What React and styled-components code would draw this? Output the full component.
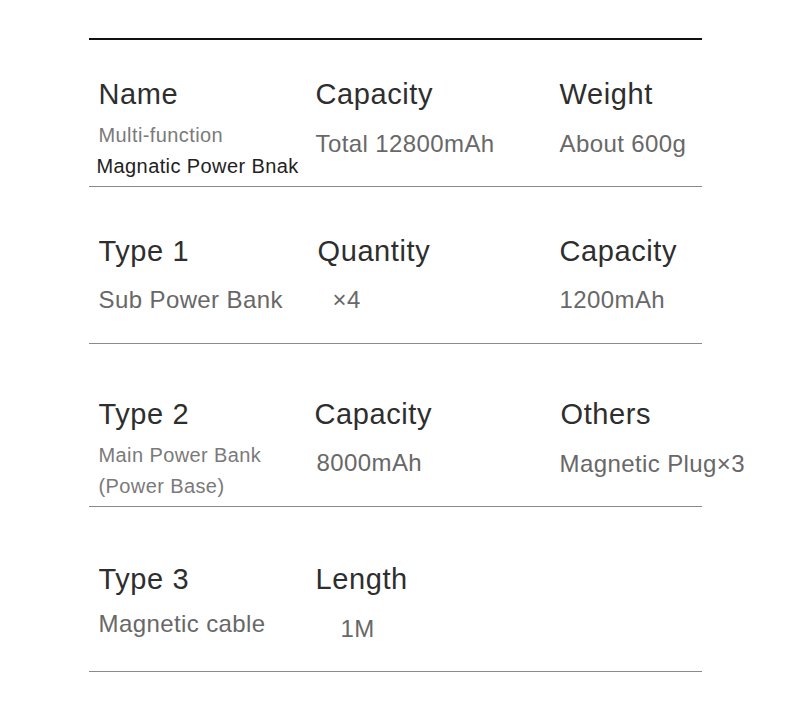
import styled, { createGlobalStyle } from 'styled-components';

const GlobalStyle = createGlobalStyle`
  html, body {
    margin: 0;
    padding: 0;
    background: #fff;
  }
  body {
    font-family: 'Liberation Sans', Arial, sans-serif;
  }
`;

const Page = styled.div`
  padding-top: 38px;
  width: 790px;
`;

const Sheet = styled.div`
  border-top: 2px solid #111;
  margin: 0 auto;
  width: 613px;
`;

const Section = styled.section`
  border-bottom: 1px solid #8a8a8a;
  display: grid;
  grid-template-columns: 217px 244px 1fr;
  padding: ${p => p.top}px 0 ${p => p.bottom}px 10px;
`;

const Cell = styled.div`
  display: flex;
  flex-direction: column;
  margin-left: ${p => p.shift || 0}px;
  white-space: nowrap;
`;

const Heading = styled.h3`
  color: #2e2e2e;
  font-size: 29px;
  font-weight: 400;
  letter-spacing: 0.6px;
  line-height: 34px;
  margin: 0;
`;

const Value = styled.div`
  color: #686868;
  font-size: 24px;
  letter-spacing: 0.4px;
  line-height: 30px;
  margin-top: ${p => p.gap}px;
  margin-left: ${p => p.indent || 0}px;
`;

const Note = styled.div`
  color: ${p => (p.dark ? '#222' : '#7a7a7a')};
  font-size: 20px;
  letter-spacing: 0.4px;
  line-height: 31px;
  margin-left: ${p => p.indent || 0}px;
  &:first-of-type {
    margin-top: ${p => p.gap || 0}px;
  }
`;

const sections = [
  {
    top: 37,
    bottom: 4,
    cells: [
      { title: 'Name', notes: [{ text: 'Multi-function' }, { text: 'Magnatic Power Bnak', dark: true, indent: -2 }], gap: 9 },
      { title: 'Capacity', value: 'Total 12800mAh', gap: 18 },
      { title: 'Weight', value: 'About 600g', gap: 18 },
    ],
  },
  {
    top: 47,
    bottom: 28,
    cells: [
      { title: 'Type 1', value: 'Sub Power Bank', gap: 17 },
      { title: 'Quantity', value: '×4', gap: 17, shift: 2, indent: 15 },
      { title: 'Capacity', value: '1200mAh', gap: 17 },
    ],
  },
  {
    top: 53,
    bottom: 4,
    cells: [
      { title: 'Type 2', notes: [{ text: 'Main Power Bank' }, { text: '(Power Base)' }], gap: 9 },
      { title: 'Capacity', value: '8000mAh', gap: 17, shift: -1, indent: 2 },
      { title: 'Others', value: 'Magnetic Plug×3', gap: 18, shift: 1, indent: -1 },
    ],
  },
  {
    top: 55,
    bottom: 27,
    cells: [
      { title: 'Type 3', value: 'Magnetic cable', gap: 13 },
      { title: 'Length', value: '1M', gap: 18, indent: 25 },
    ],
  },
];

const SpecCell = ({ cell }) => (
  <Cell shift={cell.shift}>
    <Heading>{cell.title}</Heading>
    {cell.value && (
      <Value gap={cell.gap} indent={cell.indent}>
        {cell.value}
      </Value>
    )}
    {cell.notes &&
      cell.notes.map((n, i) => (
        <Note key={i} gap={cell.gap} dark={n.dark} indent={n.indent}>
          {n.text}
        </Note>
      ))}
  </Cell>
);

const App = () => (
  <Page>
    <GlobalStyle />
    <Sheet>
      {sections.map((s, i) => (
        <Section key={i} top={s.top} bottom={s.bottom}>
          {s.cells.map(c => (
            <SpecCell key={c.title} cell={c} />
          ))}
        </Section>
      ))}
    </Sheet>
  </Page>
);

export default App;
